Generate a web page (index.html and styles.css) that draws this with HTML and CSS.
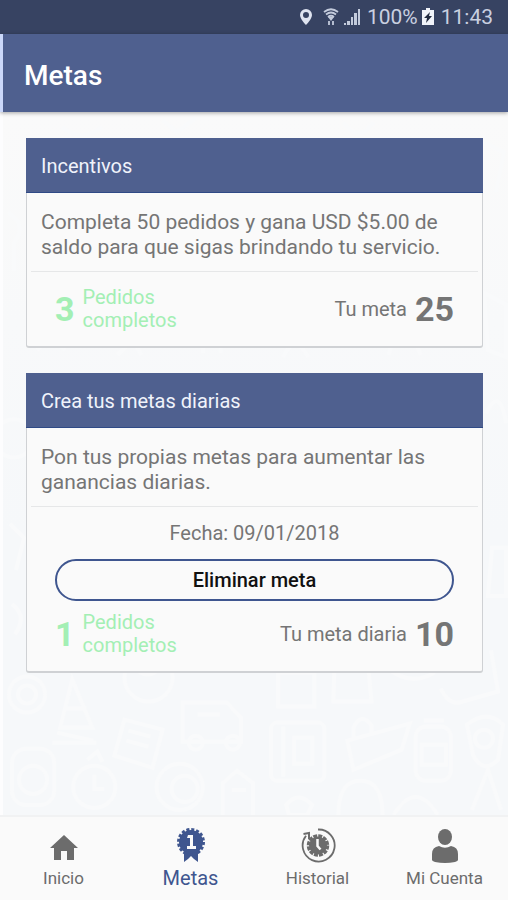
FILE: index.html
```html
<!doctype html>
<html lang="es">
<head>
    <meta charset="UTF-8">
    <meta name="viewport" content="width=device-width, initial-scale=1.0">
    <title>Metas</title>
    <link rel="stylesheet" href="styles.css">
</head>
<body>

<!-- status bar -->
<div class="status">
    <svg class="status-pin" width="14" height="18" viewBox="0 0 14 18"><path fill="#dfe4f0" fill-rule="evenodd" d="M7 1a6 6 0 0 0-6 6C1 11 7 17 7 17s6-6 6-10A6 6 0 0 0 7 1zm0 3a3 3 0 1 1 0 6 3 3 0 0 1 0-6z"/></svg>
    <svg class="status-wifi" width="16" height="18" viewBox="0 0 16 18" fill="none" stroke="#c3cbdc" stroke-width="1.800"><path d="M1 4Q8-1.500 15 4M3 6.500Q8 2.500 13 6.500M5 9Q8 6.500 11 9"/><path d="M5 9h6l-3 4z" fill="#c3cbdc" stroke="none"/><path d="M6 17v-4M10 13v4"/></svg>
    <svg class="status-signal" width="18" height="18" viewBox="0 0 18 18" fill="#c3cbdc"><path d="M1 15h2v2H1zM4 13h3v4H4zM8 9h2v8H8zM11 5h3v12h-3zM15 1h2v16h-2z"/></svg>
    <span>100%</span>
    <svg class="status-battery" width="12" height="18" viewBox="0 0 12 18"><path fill="#f1f4fa" d="M4 0h4v2h4v15H0V2h4z"/><path fill="#222b40" d="M8 4 2 10h3L4 15l6-7H7z"/></svg>
    <span>11:43</span>
</div>

<header class="topbar">
    <h1>Metas</h1>
</header>

<main class="content">
    <svg class="doodles" viewBox="0 0 505 700" preserveAspectRatio="xMidYMax slice" aria-hidden="true">
        <circle cx="25" cy="580" r="18"/><circle cx="25" cy="580" r="9"/>
        <path d="M70 565l-12 48h32zM55 618l36 8M62 594h22M50 628h44"/>
        <circle cx="146" cy="563" r="24"/><path d="M130 552q15 16 30 0"/>
        <path d="M122 605l38 10-10 38-38-12zM126 616l22 6M124 626l22 6"/>
        <path d="M180 588h44l14 15v24h-58zM195 600h22"/><circle cx="193" cy="628" r="7"/><circle cx="230" cy="628" r="7"/>
        <rect x="10" y="634" width="42" height="56" rx="14"/><circle cx="31" cy="665" r="14"/>
        <circle cx="92" cy="672" r="21"/><path d="M85 645l10-8 5 10M92 660v14h10"/>
        <circle cx="177" cy="672" r="23"/><circle cx="182" cy="674" r="13"/>
        <path d="M220 700v-32l14-12 16 12v32M229 675h14"/>
        <path d="M275 558h36v34h-36zM283 558q10-26 20 0M331 555h34l3 32h-38zM339 556q9-24 18 0"/>
        <path d="M383 553q24 20 48 5M437 574q8 18 22 13l35-10-7-41"/>
        <rect x="268" y="608" width="53" height="58" rx="6"/><path d="M280 612v50M291 623h18v26h-18z"/>
        <path d="M344 626l62-17-8 26-48 20zM350 623v-10q8-16 18-2v10"/>
        <rect x="412" y="612" width="35" height="54" rx="10"/><path d="M418 630h24v20h-24zM420 606h20"/>
        <path d="M463 610q20-16 36 0l-5 35q-15 15-25-5z"/><circle cx="480" cy="624" r="9"/>
        <path d="M335 700q0-34 22-34t22 34M390 700q22-36 44 0M468 695l16-40 13 40"/>
        <path d="M283 690q12-15 26 0l-5 10h-18z"/>
        <circle cx="12" cy="325" r="19"/><path d="M480 180l22 12v52l-18-7zM482 300q14-28 20 10M488 434h14v48h-18z"/>
        <path d="M35 237l14-12 14 12M115 242l15-15 9 15M200 240v-18h18v18M280 244q12-25 25 0M385 242l6-20h18l8 20"/>
        <path d="M6 100q20 12 6 30v28M8 410l14 14-8 32M10 490q16 12 3 30M480 30l20 10-8 40"/>
        <path d="M60 15q18 16 40 0M160 8l14 12 19-14M340 10q15 22 30 0"/>
    </svg>

    <section class="card">
        <h2>Incentivos</h2>
        <p class="card-text">Completa 50 pedidos y gana USD $5.00 de saldo para que sigas brindando tu servicio.</p>
        <div class="card-detail">
            <div class="goal">
                <div class="done"><strong>3</strong><span>Pedidos completos</span></div>
                <div class="target"><span>Tu meta</span><strong>25</strong></div>
            </div>
        </div>
    </section>

    <section class="card">
        <h2>Crea tus metas diarias</h2>
        <p class="card-text">Pon tus propias metas para aumentar las ganancias diarias.</p>
        <div class="card-detail">
            <p class="date">Fecha: 09/01/2018</p>
            <button class="remove" type="button">Eliminar meta</button>
            <div class="goal">
                <div class="done"><strong>1</strong><span>Pedidos completos</span></div>
                <div class="target"><span>Tu meta diaria</span><strong>10</strong></div>
            </div>
        </div>
    </section>
</main>

<nav class="tabs">
    <a href="#inicio">
        <svg width="36" height="36" viewBox="0 0 36 36"><path fill="currentColor" d="M18 8 4 21h4v12h7v-9h6v9h7V21h4z"/></svg>
        <span>Inicio</span>
    </a>
    <a class="active" href="#metas" aria-current="page">
        <svg width="36" height="36" viewBox="0 0 36 36">
            <path fill="currentColor" d="M11 22v13l4-3 3-3 3 3 4 3V22z"/>
            <circle cx="18" cy="15" r="12" fill="currentColor"/>
            <circle cx="18" cy="15" r="12.500" fill="none" stroke="currentColor" stroke-width="3" stroke-dasharray="3 1.900"/>
            <path fill="#fafafa" d="M15 8h5v11h3v3h-9v-3h3v-8h-3z"/>
        </svg>
        <span>Metas</span>
    </a>
    <a href="#historial">
        <svg width="36" height="36" viewBox="0 0 36 36">
            <path fill="none" stroke="currentColor" stroke-width="1.800" d="M18 2.500a16 16 0 1 1-12 6.200"/>
            <path fill="none" stroke="currentColor" stroke-width="2" d="M3.500 7 9 6v6"/>
            <circle cx="18" cy="18.500" r="9" fill="currentColor"/>
            <circle cx="18" cy="18.500" r="9.500" fill="none" stroke="currentColor" stroke-width="3.500" stroke-dasharray="3.900 1.070"/>
            <path fill="none" stroke="#fafafa" stroke-width="2.500" d="M17.500 12v7l3 3.500"/>
        </svg>
        <span>Historial</span>
    </a>
    <a href="#cuenta">
        <svg width="36" height="36" viewBox="0 0 36 36"><ellipse cx="18" cy="10" rx="7" ry="8" fill="currentColor"/><path fill="currentColor" d="M12 19q6 3.500 12 0 7 1 7 8v6q0 1-3 2-10 2-20 0-3-1-3-2v-6q0-7 7-8z"/></svg>
        <span>Mi Cuenta</span>
    </a>
</nav>

</body>
</html>
```
FILE: styles.css
```css
* {
    box-sizing: border-box;
}
body {
    margin: 0;
    min-height: 100vh;
    display: flex;
    flex-direction: column;
    font-family: Roboto, sans-serif;
    color: #757575;
    background: #fafafa;
}
h1, h2, p {
    margin: 0;
    font-weight: 400;
}
svg {
    display: block;
    flex: none;
}

.status {
    display: flex;
    align-items: center;
    justify-content: flex-end;
    height: 34px;
    padding-right: 15px;
    background: #374362;
    color: #c9d0e0;
    font-size: 21px;
}
.status-pin {
    margin-right: 10px;
}
.status-wifi {
    margin-right: 4px;
}
.status-signal {
    margin-right: 6px;
}
.status-battery {
    margin: 0 7px 0 4px;
}

.topbar {
    position: relative;
    z-index: 1;
    padding: 25px 21px 20px;
    border-left: 3px solid #cbd8fa;
    background: #4f608f;
    color: #fff;
    box-shadow: 0 1px 4px rgba(0, 0, 0, .35);
}
.topbar h1 {
    font-size: 28px;
    line-height: 33px;
    font-weight: 500;
}

.content {
    position: relative;
    flex: 1;
    display: flex;
    flex-direction: column;
    gap: 25px;
    padding: 26px 25px 26px 23px;
    border-left: 3px solid #fdfdfe;
    background: linear-gradient(#fafafa, #f6f8fa 60%);
}
.doodles {
    position: absolute;
    top: 0;
    left: 0;
    width: 100%;
    height: 100%;
    fill: none;
    stroke: #f9fafb;
    stroke-width: 4;
}

.card {
    position: relative;
    border: 1px solid #cfd1d4;
    border-bottom-width: 2px;
    border-top: 0;
    border-radius: 0 0 3px 3px;
    background: #fafafa;
}
.card h2 {
    margin: 0 -1px;
    padding: 16px 15px 14px;
    border-bottom: 1px solid #2f4a86;
    background: #4f608f;
    color: #f0f3fb;
    font-size: 20px;
    line-height: 24px;
}
.card-text {
    padding: 17px 14px 11px;
    font-size: 21px;
    line-height: 25px;
}
.card-detail {
    margin: 0 4px;
    padding: 14px 24px;
    border-top: 1px solid #e6e7e8;
}
.date {
    font-size: 20px;
    line-height: 24px;
    text-align: center;
}
.remove {
    display: block;
    width: 100%;
    height: 42px;
    margin: 14px 0 10px;
    border: 2px solid #3f568f;
    border-radius: 21px;
    background: #fafafa;
    color: #111;
    font-family: inherit;
    font-size: 20px;
    font-weight: 500;
}
.goal {
    display: flex;
    align-items: center;
    justify-content: space-between;
}
.goal strong {
    font-size: 34px;
    line-height: 40px;
}
.done, .target {
    display: flex;
    align-items: center;
    gap: 8px;
    font-size: 20px;
}
.done {
    color: #a3efb4;
}
.done strong {
    min-width: 19px;
}
.done span {
    width: min-content;
    line-height: 23px;
}

.tabs {
    display: grid;
    grid-template-columns: repeat(4, 1fr);
    padding: 10px 0;
    border-top: 2px solid #f1f2f3;
    background: #fafafa;
}
.tabs a {
    display: flex;
    flex-direction: column;
    align-items: center;
    gap: 3px;
    color: #6c6c6c;
    font-size: 17px;
    line-height: 24px;
    text-decoration: none;
}
.tabs .active {
    color: #3f568f;
    font-size: 20px;
}
```
